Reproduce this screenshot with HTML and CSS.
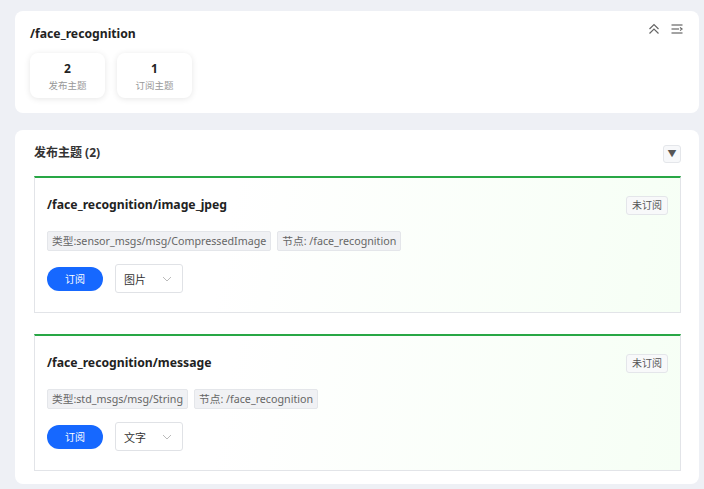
FILE: index.html
```html
<!DOCTYPE html>
<html lang="zh-CN">
<head>
  <meta charset="UTF-8">
  <meta name="viewport" content="width=device-width, initial-scale=1.0">
  <title>/face_recognition</title>
  <link rel="stylesheet" href="styles.css">
</head>
<body>
  <!-- Node summary -->
  <div class="card node-card">
    <div class="node-head">
      <h2 class="node-name">/face_recognition</h2>
      <div class="node-tools">
        <svg width="14" height="14" viewBox="0 0 14 14" fill="none" stroke="#666" stroke-width="1.2">
          <path d="M2.5 7 L7 2.5 L11.5 7"/>
          <path d="M2.5 11.5 L7 7 L11.5 11.5"/>
        </svg>
        <svg width="14" height="14" viewBox="0 0 14 14" fill="none" stroke="#666" stroke-width="1.2">
          <path d="M1.5 3 H12.5"/>
          <path d="M1.5 7 H9"/>
          <path d="M1.5 11 H12.5"/>
          <path d="M10 5.5 L12 7 L10 8.5"/>
        </svg>
      </div>
    </div>
    <div class="stats">
      <div class="stat">
        <div class="stat-num">2</div>
        <div class="stat-label">发布主题</div>
      </div>
      <div class="stat">
        <div class="stat-num">1</div>
        <div class="stat-label">订阅主题</div>
      </div>
    </div>
  </div>

  <!-- Published topics -->
  <div class="card topics-card">
    <div class="section-head">
      <h3>发布主题 (2)</h3>
      <button class="toggle">&#9660;</button>
    </div>

    <div class="topic">
      <div class="topic-head">
        <h4>/face_recognition/image_jpeg</h4>
        <span class="status">未订阅</span>
      </div>
      <div class="tags">
        <span class="tag">类型:sensor_msgs/msg/CompressedImage</span>
        <span class="tag">节点: /face_recognition</span>
      </div>
      <div class="actions">
        <button class="btn-sub">订阅</button>
        <div class="select">
          <span>图片</span>
          <svg width="10" height="6" viewBox="0 0 10 6" fill="none" stroke="#bbb" stroke-width="1"><path d="M1 1 L5 5 L9 1"/></svg>
        </div>
      </div>
    </div>

    <div class="topic">
      <div class="topic-head">
        <h4>/face_recognition/message</h4>
        <span class="status">未订阅</span>
      </div>
      <div class="tags">
        <span class="tag">类型:std_msgs/msg/String</span>
        <span class="tag">节点: /face_recognition</span>
      </div>
      <div class="actions">
        <button class="btn-sub">订阅</button>
        <div class="select">
          <span>文字</span>
          <svg width="10" height="6" viewBox="0 0 10 6" fill="none" stroke="#bbb" stroke-width="1"><path d="M1 1 L5 5 L9 1"/></svg>
        </div>
      </div>
    </div>
  </div>
</body>
</html>
```

FILE: styles.css
```css
* {
  margin: 0;
  padding: 0;
  box-sizing: border-box;
  font-family: 'Noto Sans', 'Noto Sans CJK SC', sans-serif;
}

body {
  background: #eef0f5;
  padding: 11px 5px 0 15px;
  color: #222;
}

.card {
  background: #fff;
  border-radius: 8px;
}

.node-card {
  padding: 14px 15px 14px 15px;
  height: 102px;
}

.node-head {
  display: flex;
  justify-content: space-between;
  align-items: flex-start;
}

.node-name {
  font-size: 12.2px;
  font-weight: 700;
  line-height: 18px;
  margin-top: 0;
}

.node-tools {
  display: flex;
  gap: 9px;
  margin-right: 0;
  margin-top: -3px;
}

.stats {
  display: flex;
  gap: 12px;
  margin-top: 10px;
}

.stat {
  width: 75px;
  height: 45px;
  border-radius: 8px;
  background: #fff;
  box-shadow: 0 1px 6px rgba(0, 0, 0, 0.1);
  text-align: center;
  padding-top: 8px;
}

.stat-num {
  font-size: 12px;
  font-weight: 700;
  line-height: 16px;
}

.stat-label {
  font-size: 9.5px;
  color: #999;
  line-height: 14px;
  margin-top: 2px;
}

.topics-card {
  margin-top: 17px;
  padding: 12px 18px 13px 19px;
}

.section-head {
  display: flex;
  justify-content: space-between;
  align-items: center;
  height: 20px;
  margin-bottom: 14px;
}

.section-head h3 {
  font-size: 12px;
  font-weight: 700;
  color: #333;
}

.toggle {
  width: 18px;
  height: 18px;
  border: 1px solid #e4e6ea;
  border-radius: 3px;
  background: #f7f8fa;
  color: #555;
  font-size: 9px;
  line-height: 16px;
  margin-top: 4px;
}

.topic {
  border: 1px solid #e2e4e8;
  border-top: 2px solid #28a745;
  background: linear-gradient(100deg, #ffffff 30%, #f6fff5);
  padding: 18px 12px 18px 12px;
  height: 137px;
}

.topic + .topic {
  margin-top: 21px;
}

.topic-head {
  display: flex;
  justify-content: space-between;
  align-items: flex-start;
}

.topic-head h4 {
  font-size: 12.2px;
  font-weight: 700;
  line-height: 18px;
  color: #222;
}

.status {
  font-size: 10px;
  color: #555;
  border: 1px solid #e4e6ea;
  background: #f8f9fa;
  border-radius: 3px;
  padding: 0 5px;
  line-height: 17px;
}

.tags {
  display: flex;
  gap: 6px;
  margin-top: 16px;
}

.tag {
  font-size: 10.7px;
  color: #666;
  background: #f0f1f4;
  border: 1px solid #e4e6ea;
  border-radius: 2px;
  padding: 0 4px;
  line-height: 18px;
}

.actions {
  display: flex;
  align-items: center;
  gap: 12px;
  margin-top: 13px;
}

.btn-sub {
  width: 56px;
  height: 24px;
  border: none;
  border-radius: 12px;
  background: #1668ff;
  color: #fff;
  font-size: 10px;
  font-family: 'Noto Sans CJK SC', sans-serif;
}

.select {
  width: 68px;
  height: 29px;
  border: 1px solid #e0e2e6;
  border-radius: 3px;
  background: #fff;
  display: flex;
  align-items: center;
  justify-content: space-between;
  padding: 0 10px 0 8px;
  font-size: 11px;
  color: #333;
}
```
